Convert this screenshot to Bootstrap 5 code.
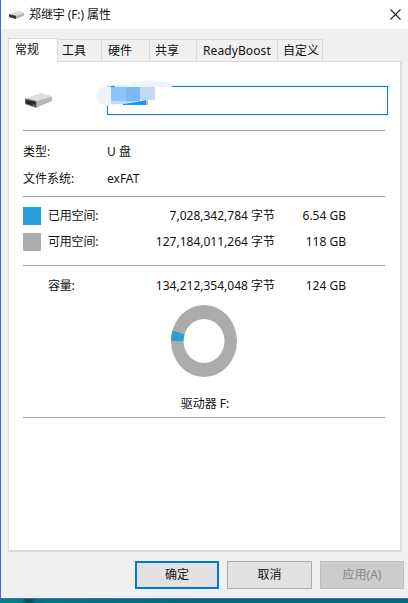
<!DOCTYPE html>
<html lang="zh-CN">
<head>
<meta charset="utf-8">
<meta name="viewport" content="width=device-width, initial-scale=1">
<title>郑继宇 (F:) 属性</title>
<link href="https://cdn.jsdelivr.net/npm/bootstrap@5.3.0/dist/css/bootstrap.min.css" rel="stylesheet">
<style>
body{background:#006a78;font:12px/16px "Noto Sans","Noto Sans CJK SC",sans-serif;color:#111;width:408px;height:603px;overflow:hidden}
.desktop-strip{height:4px;background:linear-gradient(90deg,#008082 0 22px,#064d55 26px 31px,#007482 36px,#006a78 200px)}
.win{height:599px;background:#f0f0f0;border-left:1px solid #3b70c4;border-bottom:1px solid #3b70c4}
.titlebar{height:29px;background:#fff;padding:0 7px 0 8px}
.title-text{margin-left:5px;letter-spacing:-.1px}
.tabs{height:24px;margin:8px 0 0 7px}
.tabs .nav-link{height:22px;padding:0 0 0 5px;border:1px solid #dcdcdc;border-left:0;border-bottom:0;border-radius:0;background:#f0f0f0;color:#111;line-height:21px;text-align:left;white-space:nowrap}
.tabs .nav-link.active{height:24px;background:#fff;border-left:1px solid #dcdcdc;margin-bottom:-1px;position:relative;line-height:22px;padding-left:6px}
.tabs .t0{width:50px}.tabs .t1{width:44px;padding-left:4px}.tabs .t2{width:48px;padding-left:6px}.tabs .t3{width:47px}.tabs .t4{width:81px;padding-left:6px;letter-spacing:.1px}.tabs .t5{width:45px}
.sheet{width:394px;height:491px;margin-left:7px;background:#fff;border:1px solid #dcdcdc;border-right-width:2px;border-bottom-width:2px;padding:0 14px}
.rule{width:362px;height:1px;background:#a0a0a0}
.head-row{height:68px;padding-top:24px}
.drive-ico{margin-top:6px}
.volume{width:281px;height:29px;border:1px solid #0f7fd8;box-shadow:0 0 0 1px #e4f1fc;margin-left:54px}
.smudge{left:-12px;top:-7px}
.facts{padding:7px 0 4px}
.fact{height:27px}.fact>span:first-child{width:84px}
.usage{padding:6px 0 10px}
.stat{height:26px}
.swatch{width:18px;height:18px;margin-right:7px}
.used{background:#26a0da}.free{background:#ababab}
.stat-name{width:84px;letter-spacing:-.2px}.stat-bytes{width:143px}.stat-size{width:71px}
.capacity{padding-top:7px}
.chart{width:362px;padding-top:6px}
.chart-label{height:26px;line-height:26px;margin-top:14px;padding-left:2px}
.dlg{height:28px;padding:0;border-radius:0;border:1px solid #adadad;background:#e1e1e1;color:#111;font-size:12px;line-height:22px}
.dlg.ok{width:84px;border:2px solid #0078d7}.dlg.cancel{width:85px}.dlg.apply{width:84px;background:#ccc;border-color:#bfbfbf;color:#858585;opacity:1}
.actions{margin:9px 4px 0 0;gap:8px}
</style>
<script src="https://cdn.jsdelivr.net/npm/bootstrap@5.3.0/dist/js/bootstrap.bundle.min.js"></script>
</head>
<body>
<main class="win">
  <header class="titlebar d-flex align-items-center">
    <svg width="15" height="10" viewBox="0 0 28 17"><path d="M0 7 18 1 28 5V10L13 16 0 12Z" fill="#b4b4b6"/><path d="M0 7 18 1 28 5 13 10Z" fill="#dddde0"/><path d="M0 7 13 10V16L0 12Z" fill="#343738"/></svg>
    <span class="title-text">郑继宇 (F:) 属性</span>
    <svg class="ms-auto" width="11" height="11" viewBox="0 0 11 11"><path d="M.5.5 10.5 10.5M10.5.5.5 10.5" stroke="#222" stroke-width="1.1"/></svg>
  </header>
  <nav class="tabs nav flex-nowrap align-items-end">
    <a class="nav-link active t0">常规</a><a class="nav-link t1">工具</a><a class="nav-link t2">硬件</a><a class="nav-link t3">共享</a><a class="nav-link t4">ReadyBoost</a><a class="nav-link t5">自定义</a>
  </nav>
  <section class="sheet">
    <div class="head-row d-flex">
      <svg class="drive-ico flex-shrink-0" width="30" height="18" viewBox="0 0 30 18"><path d="M2 6.500 18 1.500 29 4.500V9L14 15.500 12 15.700 2 12Z" fill="#b9b9bb"/><path d="M2 6.500 17 1.700Q18.500 1.300 20 1.700L29 4.500 14 9Z" fill="#dedee1"/><path d="M2 6.500 13.500 9V15.700L2 12Z" fill="#66696b"/><path d="M3 8 12.500 10V14.500L3 11.500Z" fill="#24292a"/><path d="M10 12.300 12 12.800V14.200L10 13.600Z" fill="#35a045"/></svg>
      <div class="volume position-relative flex-shrink-0">
        <svg class="smudge position-absolute" width="80" height="28" viewBox="0 0 80 28"><path d="M0 16C0 9 6 6 14 6H27C42 -1 72 -1 76 6V7H59L57 12 49 21 28 23 15 26C5 26 0 23 0 16Z" fill="#ecf5fc"/><path d="M14 6.500H19" stroke="#2a8fdf"/><path d="M15 7H44V21H15Z" fill="#8bc4fc"/><path d="M30 7H44V21H30Z" fill="#79b8fb"/><path d="M44 7H59V20H44Z" fill="#c3d9f2"/><path d="M15 21H44L27 24H15Z" fill="#b9dcfc"/><path d="M27 24 40 22 50 20V25H27Z" fill="#2590f5"/><path d="M51 20.500V25" stroke="#b06a2a"/></svg>
      </div>
    </div>
    <div class="rule"></div>
    <div class="facts">
      <div class="fact d-flex align-items-center"><span>类型:</span><span>U 盘</span></div>
      <div class="fact d-flex align-items-center"><span>文件系统:</span><span>exFAT</span></div>
    </div>
    <div class="rule"></div>
    <div class="usage">
      <div class="stat d-flex align-items-center"><i class="swatch used"></i><span class="stat-name">已用空间:</span><span class="stat-bytes text-end">7,028,342,784 字节</span><span class="stat-size text-end">6.54 GB</span></div>
      <div class="stat d-flex align-items-center"><i class="swatch free"></i><span class="stat-name">可用空间:</span><span class="stat-bytes text-end">127,184,011,264 字节</span><span class="stat-size text-end">118 GB</span></div>
    </div>
    <div class="rule"></div>
    <div class="capacity">
      <div class="stat d-flex align-items-center"><i class="swatch"></i><span class="stat-name">容量:</span><span class="stat-bytes text-end">134,212,354,048 字节</span><span class="stat-size text-end">124 GB</span></div>
    </div>
    <div class="chart text-center">
      <svg class="d-block mx-auto" width="66" height="72" viewBox="0 0 66 72"><path d="M33 0A33 36 0 1 1 33 72 33 36 0 0 1 33 0ZM33 14A20.500 22 0 1 0 33 58 20.500 22 0 0 0 33 14Z" fill="#ababab"/><path d="M0 36A33 36 0 0 1 1.500 25.500L13.500 29.500Q12.500 32.500 12.500 36Z" fill="#26a0da"/></svg>
      <div class="chart-label">驱动器 F:</div>
    </div>
    <div class="rule"></div>
  </section>
  <footer class="actions d-flex justify-content-end">
    <button class="btn dlg ok">确定</button><button class="btn dlg cancel">取消</button><button class="btn dlg apply" disabled>应用(A)</button>
  </footer>
</main>
<div class="desktop-strip"></div>
</body>
</html>
